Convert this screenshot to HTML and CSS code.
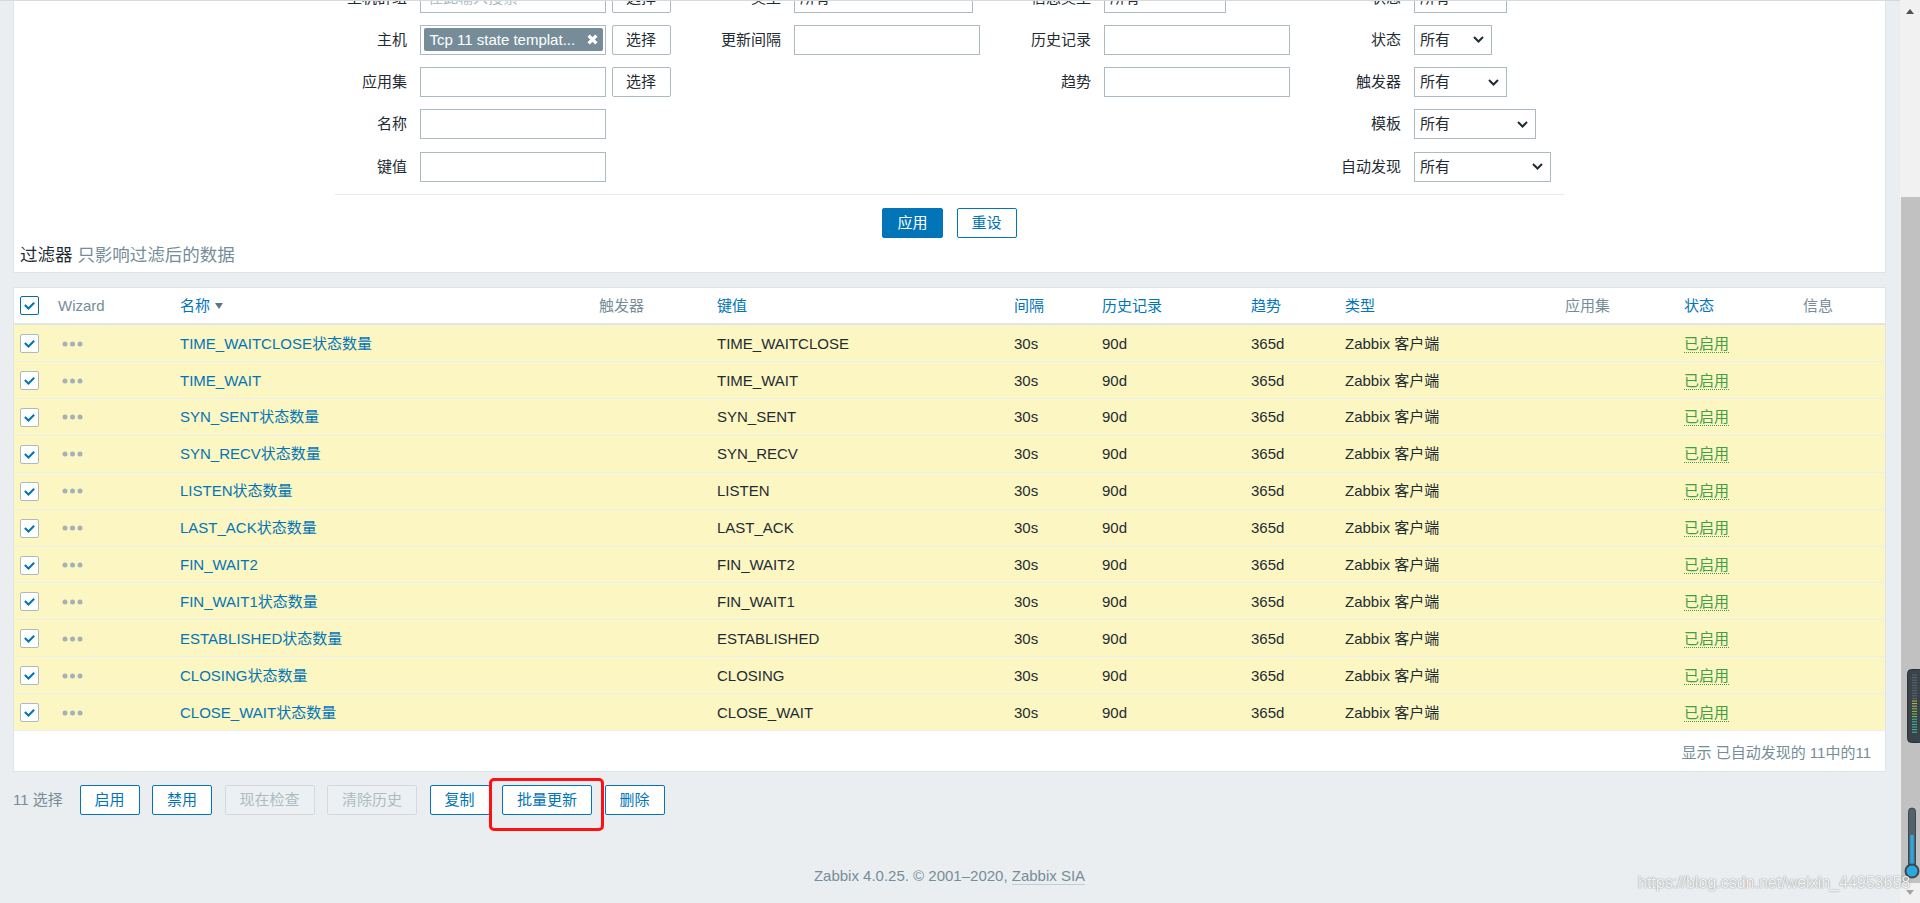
FILE: index.html
```html
<!DOCTYPE html>
<html lang="zh-CN">
<head>
<meta charset="utf-8">
<title>监控项 - Zabbix</title>
<link rel="stylesheet" href="styles.css">
</head>
<body>
<div class="viewport">
  <div class="page">
    <div class="filter">
      <div class="form-grid">
        <div class="label">主机群组</div>
        <div class="ctrl"><div class="input ph">在此输入搜索</div><button class="btn-grey">选择</button></div>
        <div class="label">类型</div>
        <div class="ctrl"><div class="select w179"><span>所有</span><svg class="chev" viewBox="0 0 11 7"><path d="M1 1L5.5 5.5L10 1"/></svg></div></div>
        <div class="label">信息类型</div>
        <div class="ctrl"><div class="select w122"><span>所有</span><svg class="chev" viewBox="0 0 11 7"><path d="M1 1L5.5 5.5L10 1"/></svg></div></div>
        <div class="label">状态</div>
        <div class="ctrl"><div class="select w93"><span>所有</span><svg class="chev" viewBox="0 0 11 7"><path d="M1 1L5.5 5.5L10 1"/></svg></div></div>

        <div class="label">主机</div>
        <div class="ctrl"><div class="input ms"><div class="tag"><span>Tcp 11 state templat...</span><svg class="x" viewBox="0 0 10 10"><path d="M1.5 1.5L8.5 8.5M8.5 1.5L1.5 8.5"/></svg></div></div><button class="btn-grey">选择</button></div>
        <div class="label">更新间隔</div>
        <div class="ctrl"><div class="input"></div></div>
        <div class="label">历史记录</div>
        <div class="ctrl"><div class="input"></div></div>
        <div class="label">状态</div>
        <div class="ctrl"><div class="select w78"><span>所有</span><svg class="chev" viewBox="0 0 11 7"><path d="M1 1L5.5 5.5L10 1"/></svg></div></div>

        <div class="label">应用集</div>
        <div class="ctrl"><div class="input"></div><button class="btn-grey">选择</button></div>
        <div class="label"></div>
        <div class="ctrl"></div>
        <div class="label">趋势</div>
        <div class="ctrl"><div class="input"></div></div>
        <div class="label">触发器</div>
        <div class="ctrl"><div class="select w93"><span>所有</span><svg class="chev" viewBox="0 0 11 7"><path d="M1 1L5.5 5.5L10 1"/></svg></div></div>

        <div class="label">名称</div>
        <div class="ctrl"><div class="input"></div></div>
        <div class="label"></div>
        <div class="ctrl"></div>
        <div class="label"></div>
        <div class="ctrl"></div>
        <div class="label">模板</div>
        <div class="ctrl"><div class="select w122"><span>所有</span><svg class="chev" viewBox="0 0 11 7"><path d="M1 1L5.5 5.5L10 1"/></svg></div></div>

        <div class="label">键值</div>
        <div class="ctrl"><div class="input"></div></div>
        <div class="label"></div>
        <div class="ctrl"></div>
        <div class="label"></div>
        <div class="ctrl"></div>
        <div class="label">自动发现</div>
        <div class="ctrl"><div class="select w137"><span>所有</span><svg class="chev" viewBox="0 0 11 7"><path d="M1 1L5.5 5.5L10 1"/></svg></div></div>
      </div>
      <div class="apply-row">
        <button class="btn primary">应用</button>
        <button class="btn">重设</button>
      </div>
      <div class="filter-title">过滤器 <span class="muted">只影响过滤后的数据</span></div>
    </div>

    <div class="table-box">
      <div class="cols thead">
        <div><span class="cb head"><svg viewBox="0 0 20 20"><path d="M4.5 9.5L8.8 13.6L15.5 6.8"/></svg></span></div>
        <div class="gray">Wizard</div>
        <div class="blue">名称<span class="sort-arrow"></span></div>
        <div class="gray">触发器</div>
        <div class="blue">键值</div>
        <div class="blue">间隔</div>
        <div class="blue">历史记录</div>
        <div class="blue">趋势</div>
        <div class="blue">类型</div>
        <div class="gray">应用集</div>
        <div class="blue">状态</div>
        <div class="gray">信息</div>
      </div>

      <div class="cols tr">
        <div><span class="cb"><svg viewBox="0 0 20 20"><path d="M4.5 9.5L8.8 13.6L15.5 6.8"/></svg></span></div>
        <div><svg class="dots" viewBox="0 0 21 6"><circle cx="3" cy="3" r="2.5"/><circle cx="10.5" cy="3" r="2.5"/><circle cx="18" cy="3" r="2.5"/></svg></div>
        <div class="blue">TIME_WAITCLOSE状态数量</div><div></div><div>TIME_WAITCLOSE</div><div>30s</div><div>90d</div><div>365d</div><div>Zabbix 客户端</div><div></div><div><span class="st">已启用</span></div><div></div>
      </div>
      <div class="cols tr">
        <div><span class="cb"><svg viewBox="0 0 20 20"><path d="M4.5 9.5L8.8 13.6L15.5 6.8"/></svg></span></div>
        <div><svg class="dots" viewBox="0 0 21 6"><circle cx="3" cy="3" r="2.5"/><circle cx="10.5" cy="3" r="2.5"/><circle cx="18" cy="3" r="2.5"/></svg></div>
        <div class="blue">TIME_WAIT</div><div></div><div>TIME_WAIT</div><div>30s</div><div>90d</div><div>365d</div><div>Zabbix 客户端</div><div></div><div><span class="st">已启用</span></div><div></div>
      </div>
      <div class="cols tr">
        <div><span class="cb"><svg viewBox="0 0 20 20"><path d="M4.5 9.5L8.8 13.6L15.5 6.8"/></svg></span></div>
        <div><svg class="dots" viewBox="0 0 21 6"><circle cx="3" cy="3" r="2.5"/><circle cx="10.5" cy="3" r="2.5"/><circle cx="18" cy="3" r="2.5"/></svg></div>
        <div class="blue">SYN_SENT状态数量</div><div></div><div>SYN_SENT</div><div>30s</div><div>90d</div><div>365d</div><div>Zabbix 客户端</div><div></div><div><span class="st">已启用</span></div><div></div>
      </div>
      <div class="cols tr">
        <div><span class="cb"><svg viewBox="0 0 20 20"><path d="M4.5 9.5L8.8 13.6L15.5 6.8"/></svg></span></div>
        <div><svg class="dots" viewBox="0 0 21 6"><circle cx="3" cy="3" r="2.5"/><circle cx="10.5" cy="3" r="2.5"/><circle cx="18" cy="3" r="2.5"/></svg></div>
        <div class="blue">SYN_RECV状态数量</div><div></div><div>SYN_RECV</div><div>30s</div><div>90d</div><div>365d</div><div>Zabbix 客户端</div><div></div><div><span class="st">已启用</span></div><div></div>
      </div>
      <div class="cols tr">
        <div><span class="cb"><svg viewBox="0 0 20 20"><path d="M4.5 9.5L8.8 13.6L15.5 6.8"/></svg></span></div>
        <div><svg class="dots" viewBox="0 0 21 6"><circle cx="3" cy="3" r="2.5"/><circle cx="10.5" cy="3" r="2.5"/><circle cx="18" cy="3" r="2.5"/></svg></div>
        <div class="blue">LISTEN状态数量</div><div></div><div>LISTEN</div><div>30s</div><div>90d</div><div>365d</div><div>Zabbix 客户端</div><div></div><div><span class="st">已启用</span></div><div></div>
      </div>
      <div class="cols tr">
        <div><span class="cb"><svg viewBox="0 0 20 20"><path d="M4.5 9.5L8.8 13.6L15.5 6.8"/></svg></span></div>
        <div><svg class="dots" viewBox="0 0 21 6"><circle cx="3" cy="3" r="2.5"/><circle cx="10.5" cy="3" r="2.5"/><circle cx="18" cy="3" r="2.5"/></svg></div>
        <div class="blue">LAST_ACK状态数量</div><div></div><div>LAST_ACK</div><div>30s</div><div>90d</div><div>365d</div><div>Zabbix 客户端</div><div></div><div><span class="st">已启用</span></div><div></div>
      </div>
      <div class="cols tr">
        <div><span class="cb"><svg viewBox="0 0 20 20"><path d="M4.5 9.5L8.8 13.6L15.5 6.8"/></svg></span></div>
        <div><svg class="dots" viewBox="0 0 21 6"><circle cx="3" cy="3" r="2.5"/><circle cx="10.5" cy="3" r="2.5"/><circle cx="18" cy="3" r="2.5"/></svg></div>
        <div class="blue">FIN_WAIT2</div><div></div><div>FIN_WAIT2</div><div>30s</div><div>90d</div><div>365d</div><div>Zabbix 客户端</div><div></div><div><span class="st">已启用</span></div><div></div>
      </div>
      <div class="cols tr">
        <div><span class="cb"><svg viewBox="0 0 20 20"><path d="M4.5 9.5L8.8 13.6L15.5 6.8"/></svg></span></div>
        <div><svg class="dots" viewBox="0 0 21 6"><circle cx="3" cy="3" r="2.5"/><circle cx="10.5" cy="3" r="2.5"/><circle cx="18" cy="3" r="2.5"/></svg></div>
        <div class="blue">FIN_WAIT1状态数量</div><div></div><div>FIN_WAIT1</div><div>30s</div><div>90d</div><div>365d</div><div>Zabbix 客户端</div><div></div><div><span class="st">已启用</span></div><div></div>
      </div>
      <div class="cols tr">
        <div><span class="cb"><svg viewBox="0 0 20 20"><path d="M4.5 9.5L8.8 13.6L15.5 6.8"/></svg></span></div>
        <div><svg class="dots" viewBox="0 0 21 6"><circle cx="3" cy="3" r="2.5"/><circle cx="10.5" cy="3" r="2.5"/><circle cx="18" cy="3" r="2.5"/></svg></div>
        <div class="blue">ESTABLISHED状态数量</div><div></div><div>ESTABLISHED</div><div>30s</div><div>90d</div><div>365d</div><div>Zabbix 客户端</div><div></div><div><span class="st">已启用</span></div><div></div>
      </div>
      <div class="cols tr">
        <div><span class="cb"><svg viewBox="0 0 20 20"><path d="M4.5 9.5L8.8 13.6L15.5 6.8"/></svg></span></div>
        <div><svg class="dots" viewBox="0 0 21 6"><circle cx="3" cy="3" r="2.5"/><circle cx="10.5" cy="3" r="2.5"/><circle cx="18" cy="3" r="2.5"/></svg></div>
        <div class="blue">CLOSING状态数量</div><div></div><div>CLOSING</div><div>30s</div><div>90d</div><div>365d</div><div>Zabbix 客户端</div><div></div><div><span class="st">已启用</span></div><div></div>
      </div>
      <div class="cols tr">
        <div><span class="cb"><svg viewBox="0 0 20 20"><path d="M4.5 9.5L8.8 13.6L15.5 6.8"/></svg></span></div>
        <div><svg class="dots" viewBox="0 0 21 6"><circle cx="3" cy="3" r="2.5"/><circle cx="10.5" cy="3" r="2.5"/><circle cx="18" cy="3" r="2.5"/></svg></div>
        <div class="blue">CLOSE_WAIT状态数量</div><div></div><div>CLOSE_WAIT</div><div>30s</div><div>90d</div><div>365d</div><div>Zabbix 客户端</div><div></div><div><span class="st">已启用</span></div><div></div>
      </div>

      <div class="tfoot">显示 已自动发现的 11中的11</div>
    </div>

    <div class="actions">
      <span class="count">11 选择</span>
      <button class="btn">启用</button>
      <button class="btn">禁用</button>
      <button class="btn disabled">现在检查</button>
      <button class="btn disabled">清除历史</button>
      <button class="btn">复制</button>
      <span class="mark"><button class="btn">批量更新</button><span class="redbox"></span></span>
      <button class="btn">删除</button>
    </div>

    <div class="footer">Zabbix 4.0.25. © 2001–2020, <span class="sia">Zabbix SIA</span></div>
  </div>
</div>

<div class="scrollbar">
  <div class="sb-btn up"><span class="tri-up"></span></div>
  <div class="sb-track"><div class="sb-thumb"></div></div>
  <div class="sb-btn down"><span class="tri-down"></span></div>
  <svg class="meter" viewBox="0 0 14 74">
    <rect x="0.5" y="0.5" width="16" height="73" rx="4" fill="#3a4349" stroke="#2b3237"/>
    <g stroke-width="1">
      <path d="M5 6H10M5 8.6H10M5 11.2H10M5 13.8H10M5 16.4H10M5 19H10M5 21.6H10M5 24.2H10M5 26.8H10M5 29.4H10" stroke="#5d676d"/>
      <path d="M5 32H10M5 34.6H10M5 37.2H10" stroke="#b9c24a"/>
      <path d="M5 39.8H10M5 42.4H10M5 45H10M5 47.6H10" stroke="#8cc24e"/>
      <path d="M5 50.2H10M5 52.8H10M5 55.4H10M5 58H10M5 60.6H10M5 63.2H10" stroke="#3ebf9c"/>
    </g>
  </svg>
  <svg class="thermo" viewBox="0 0 16 76">
    <rect x="4.5" y="3" width="7" height="62" rx="3.5" fill="#53626b" stroke="#3b474e"/>
    <rect x="6.3" y="30" width="3.4" height="36" fill="#2aa8df"/>
    <circle cx="8" cy="66" r="6.5" fill="#2aa8df" stroke="#3b474e" stroke-width="2"/>
  </svg>
</div>

<div class="watermark">https://blog.csdn.net/weixin_44953658</div>
</body>
</html>
```

FILE: styles.css
```css
html, body {
  margin: 0;
  padding: 0;
}
body {
  width: 1920px;
  height: 903px;
  overflow: hidden;
  display: flex;
  position: relative;
  background: #ebeef0;
  color: #1f2c33;
  font-family: "Liberation Sans", "Noto Sans CJK SC", sans-serif;
  font-size: 15px;
  line-height: 18px;
}
button {
  font-family: inherit;
  font-size: 15px;
  line-height: 18px;
  cursor: pointer;
}

.viewport {
  width: 1900px;
  height: 903px;
  flex: none;
  overflow: hidden;
  box-sizing: border-box;
  border-top: 1px solid #d6dadd;
}
.page {
  padding: 0 14px 0 13px;
}

/* ---------- filter ---------- */
.filter {
  margin-top: -31px;
  background: #fff;
  border: 1px solid #dfe4e7;
  padding: 11.8px 6px 5px;
}
.form-grid {
  width: 1229px;
  margin: 0 auto;
  display: grid;
  grid-template-columns: 85px 251px 123px 186px 124px 186px 124px 150px;
  grid-auto-rows: 30px;
  row-gap: 12.2px;
  padding-bottom: 12.4px;
  border-bottom: 1px solid #e6e9eb;
}
.label {
  text-align: right;
  padding-right: 13px;
  line-height: 30px;
  white-space: nowrap;
}
.ctrl {
  display: flex;
  gap: 5.6px;
  align-items: flex-start;
}
.input {
  width: 186px;
  height: 30px;
  box-sizing: border-box;
  border: 1px solid #acbbc2;
  background: #fff;
}
.input.ph {
  color: #acbbc2;
  padding-left: 7px;
  line-height: 28px;
}
.input.ms {
  padding: 2.5px;
}
.tag {
  height: 23px;
  box-sizing: border-box;
  background: #768d99;
  border-radius: 2px;
  color: #fff;
  display: flex;
  align-items: center;
  justify-content: space-between;
  padding: 0 5px 0 6px;
  white-space: nowrap;
}
.tag .x {
  width: 11px;
  height: 11px;
  stroke: #fff;
  stroke-width: 3;
  fill: none;
}
.btn-grey {
  width: 59px;
  height: 30px;
  padding: 0;
  border: 1px solid #acbbc2;
  border-radius: 2px;
  background: #fff;
  color: #1f2c33;
}
.select {
  height: 30px;
  box-sizing: border-box;
  border: 1px solid #acbbc2;
  background: #fff;
  display: flex;
  align-items: center;
  justify-content: space-between;
  padding: 0 7px 0 5px;
  white-space: nowrap;
}
.select .chev {
  width: 11px;
  height: 7px;
  fill: none;
  stroke: #1f2c33;
  stroke-width: 2;
}
.w179 { width: 179px; }
.w137 { width: 137px; }
.w122 { width: 122px; }
.w93 { width: 93px; }
.w78 { width: 78px; }

.apply-row {
  display: flex;
  justify-content: center;
  gap: 14px;
  margin-top: 13px;
}
.filter-title {
  margin-top: 5px;
  font-size: 17.5px;
  line-height: 24px;
}
.muted { color: #768d99; }

/* ---------- buttons ---------- */
.btn {
  height: 30px;
  box-sizing: border-box;
  padding: 0 14px;
  border: 1px solid #0275b8;
  border-radius: 2px;
  background: #fff;
  color: #0275b8;
  white-space: nowrap;
}
.btn.primary {
  background: #0275b8;
  color: #fff;
}
.btn.disabled {
  border-color: #d3dadf;
  background: #edf0f2;
  color: #acbbc2;
  cursor: default;
}

/* ---------- table ---------- */
.table-box {
  margin-top: 14.3px;
  background: #fff;
  border: 1px solid #dfe4e7;
}
.cols {
  display: grid;
  grid-template-columns: 38px 122px 419px 118px 297px 88px 149px 94px 220px 119px 119px 1fr;
  align-items: center;
}
.cols > div {
  padding-left: 6px;
  white-space: nowrap;
  display: flex;
  align-items: center;
}
.thead {
  height: 35px;
  border-bottom: 2px solid #dfe4e7;
}
.tr {
  height: 35.9px;
  border-bottom: 1px solid #ebeef0;
  background: #fbf6c2;
}
.tr > div {
  padding-top: 1px;
}
.blue { color: #0275b8; }
.gray { color: #768d99; }
.sort-arrow {
  display: inline-block;
  width: 0;
  height: 0;
  margin-left: 5px;
  border-left: 4.5px solid transparent;
  border-right: 4.5px solid transparent;
  border-top: 6px solid #5f7585;
}
.cb {
  width: 19px;
  height: 19px;
  box-sizing: border-box;
  border: 1px solid #acbbc2;
  border-radius: 2px;
  background: #fff;
  display: flex;
}
.cb.head {
  border-color: #0b68a8;
}
.cb svg {
  width: 17px;
  height: 17px;
  fill: none;
  stroke: #0275b8;
  stroke-width: 2.4;
}
.dots {
  width: 21px;
  height: 6px;
  margin-left: 4px;
  fill: #a5b0b7;
}
.st {
  color: #429e47;
  border-bottom: 1px dotted #429e47;
  line-height: 17px;
}
.tfoot {
  padding: 13px 14px 9px;
  text-align: right;
  color: #768d99;
}

/* ---------- actions ---------- */
.actions {
  display: flex;
  align-items: center;
  gap: 12.5px;
  margin-top: 13.3px;
}
.count {
  width: 54px;
  color: #768d99;
  white-space: nowrap;
}
.mark {
  position: relative;
  display: flex;
}
.redbox {
  position: absolute;
  left: -13.5px;
  right: -11.5px;
  top: -7px;
  bottom: -16px;
  border: 3px solid #ff1111;
  border-radius: 5px;
  pointer-events: none;
}

.footer {
  margin-top: 52px;
  text-align: center;
  color: #768d99;
}
.sia {
  border-bottom: 1px solid #c3ccd1;
}

/* ---------- scrollbar ---------- */
.scrollbar {
  width: 20px;
  height: 903px;
  flex: none;
  background: #f1f1f1;
  display: flex;
  flex-direction: column;
  position: relative;
}
.sb-btn {
  height: 20px;
  flex: none;
  display: flex;
  justify-content: center;
}
.tri-up {
  margin-top: 9px;
  width: 0;
  height: 0;
  border-left: 4.5px solid transparent;
  border-right: 4.5px solid transparent;
  border-bottom: 5px solid #505050;
}
.tri-down {
  margin-top: 7px;
  width: 0;
  height: 0;
  border-left: 4.5px solid transparent;
  border-right: 4.5px solid transparent;
  border-top: 5px solid #a3a3a3;
}
.sb-track {
  flex: 1;
  display: flex;
  flex-direction: column;
}
.sb-thumb {
  margin-top: 177px;
  margin-left: 1px;
  flex: 1;
  background: #c1c1c1;
}
.meter {
  position: absolute;
  left: 7px;
  top: 669px;
  width: 14px;
  height: 74px;
}
.thermo {
  position: absolute;
  left: 4px;
  top: 805px;
  width: 16px;
  height: 76px;
}

.watermark {
  position: absolute;
  left: 1638px;
  top: 874px;
  font-family: "Liberation Sans", sans-serif;
  font-size: 16px;
  line-height: 18px;
  color: rgba(255, 255, 255, 0.92);
  text-shadow: 0 0 1px rgba(70, 70, 70, 0.55), 0 0 2px rgba(70, 70, 70, 0.3);
  white-space: nowrap;
  pointer-events: none;
}
```
